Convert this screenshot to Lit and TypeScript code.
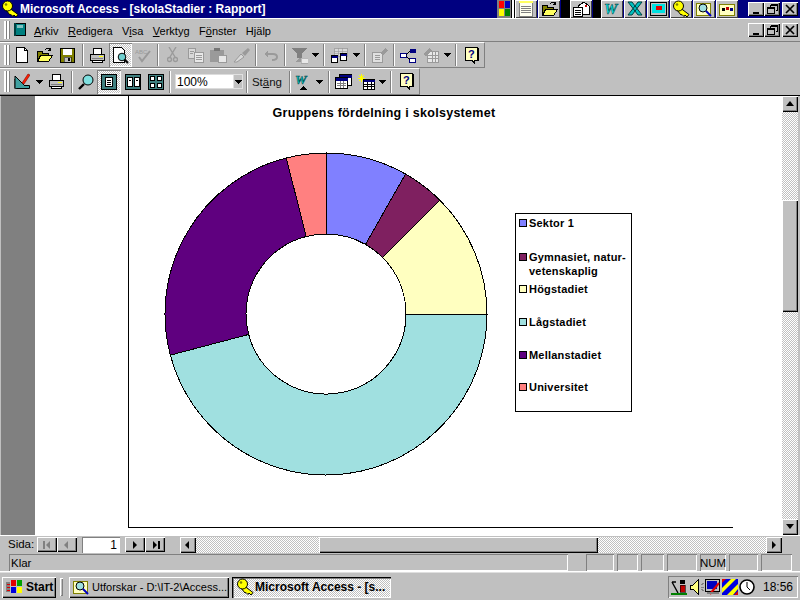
import { LitElement, html, svg, css } from "lit";
import { customElement } from "lit/decorators.js";

const I = (w: number, h: number, c: any) =>
  html`<svg class="ic" width=${w} height=${h} viewBox="0 0 ${w} ${h}" shape-rendering="crispEdges">${c}</svg>`;

const key = () => html`<svg class="ic" width="18" height="18" viewBox="0 0 18 18">
  <path d="M7 7 L17 14.500 L15 17 L13 15 L12 16.500 L10 14.500 L9 15 L5 10" fill="#ffff00" stroke="#000" stroke-width="1"/>
  <circle cx="6.500" cy="6" r="5" fill="#ffff00" stroke="#000"/><circle cx="5" cy="4.500" r="1.300" fill="#808000"/></svg>`;

const G = "#808080", D = "#9a9a9a";
const icons: Record<string, any> = {
  neww: I(16, 16, svg`<path d="M2.5 .5H10.5L13.5 3.5V15.5H2.5Z" fill="#fff" stroke="#000"/><path d="M10.5 .5V3.5H13.5" fill="none" stroke="#000"/>`),
  open: I(17, 16, svg`<path d="M1.5 4.5H6.5V6.5H12.5V14.5H1.5Z" fill="#808000" stroke="#000"/><path d="M1.5 14.5L4.5 8.5H16.5L12.5 14.5Z" fill="#ffff60" stroke="#000"/><path d="M9 2.5Q12 0 14.5 3M14.5 1V3.5H12" fill="none" stroke="#000"/>`),
  save: I(15, 15, svg`<rect x=".5" y=".5" width="14" height="14" fill="#808000" stroke="#000"/><rect x="3" y="1" width="9" height="6" fill="#fff"/><rect x="4" y="9" width="7" height="5" fill="#c0c0c0" stroke="#000" stroke-width=".5"/><rect x="8" y="10" width="2" height="3" fill="#000"/>`),
  print: I(17, 15, svg`<path d="M4.5 .5H12.5V6.5H4.5Z" fill="#fff" stroke="#000"/><path d="M1.5 6.5H15.5V12.5H1.5Z" fill="#c0c0c0" stroke="#000"/><rect x="3" y="10" width="11" height="1" fill="#808080"/><rect x="10" y="8" width="4" height="1" fill="#ffff00"/><path d="M3.5 12.5H13.5V14.5H3.5Z" fill="#fff" stroke="#000"/>`),
  prev: I(17, 17, svg`<path d="M1.5 .5H9.5L12.5 3.5V15.5H1.5Z" fill="#fff" stroke="#000"/><circle cx="10" cy="10" r="3.8" fill="#6fd0d0" stroke="#000" shape-rendering="auto"/><path d="M12.5 12.5L16 16" stroke="#000" stroke-width="2" shape-rendering="auto"/>`),
  spell: I(17, 15, svg`<text x="0" y="6" font-size="6" font-family="Liberation Sans" fill="${D}">ABC</text><path d="M4 9L7 13L15 3" fill="none" stroke="${D}" stroke-width="2" shape-rendering="auto"/>`),
  cut: I(11, 16, svg`<path d="M2 0L8 10M9 0L3 10" stroke="${D}" stroke-width="1.4" shape-rendering="auto"/><circle cx="2.5" cy="12.5" r="2" fill="none" stroke="${D}" stroke-width="1.4" shape-rendering="auto"/><circle cx="8.5" cy="12.5" r="2" fill="none" stroke="${D}" stroke-width="1.4" shape-rendering="auto"/>`),
  copy: I(16, 15, svg`<path d="M.5 .5H7.5V10.5H.5Z" fill="#d8d8d8" stroke="${D}"/><path d="M6.5 4.5H15.5V14.5H6.5Z" fill="#e8e8e8" stroke="${D}"/><path d="M8 7H14M8 9H14M8 11H14M2 3H6M2 5H5" stroke="${D}"/>`),
  paste: I(17, 15, svg`<rect x=".5" y="2.5" width="13" height="11" fill="${D}" stroke="${D}"/><rect x="4" y="0" width="6" height="3" fill="#777"/><path d="M8.5 7.5H16.5V14.5H8.5Z" fill="#e8e8e8" stroke="${D}"/>`),
  brush: I(18, 16, svg`<path d="M1 15L8 7L11 10L4 15Z" fill="#d8d8d8" stroke="${D}" shape-rendering="auto"/><path d="M9 6L15 1L17 3L12 9Z" fill="${D}" shape-rendering="auto"/>`),
  undo: I(15, 11, svg`<path d="M2 4H10Q14 4 14 7Q14 10 9 10" fill="none" stroke="${D}" stroke-width="2" shape-rendering="auto"/><path d="M5 0V8L1 4Z" fill="${D}"/>`),
  chart: I(17, 17, svg`<path d="M0 1H16L11 6V11H6V6Z" fill="${G}"/><path d="M4 15L8 11H10L14 15Z" fill="${D}"/><rect x="10" y="11" width="7" height="5" fill="#e8e8e8" stroke="${D}" stroke-width=".6"/>`),
  form: I(17, 15, svg`<rect x="3" y="0" width="13" height="8" fill="#d8d8d8" stroke="${D}" stroke-width=".8"/><path d="M3 3H16M3 5.5H16M7 0V8M11 0V8" stroke="${D}" stroke-width=".6"/><rect x=".5" y="7.5" width="6" height="7" fill="#fff" stroke="#000"/><rect x=".5" y="7.5" width="6" height="2" fill="#000080"/><rect x="9.5" y="5.5" width="6" height="7" fill="#fff" stroke="#000"/><rect x="9.5" y="5.5" width="6" height="2" fill="#000080"/>`),
  props: I(16, 15, svg`<path d="M.5 4.5H10.5V14.5H.5Z" fill="#e0e0e0" stroke="${D}"/><path d="M3 7H8M3 9H8M3 11H8" stroke="${D}"/><path d="M8 5L13 0L16 2L11 7Z" fill="${D}"/>`),
  rel: I(16, 15, svg`<rect x=".5" y="5.5" width="6" height="4" fill="#fff" stroke="#000080"/><rect x="9.5" y=".5" width="6" height="4" fill="#000080"/><rect x="9.5" y="10.5" width="6" height="4" fill="#fff" stroke="#000080"/><path d="M6 7L10 3M6 8L10 12" stroke="#000" shape-rendering="auto"/>`),
  newobj: I(16, 15, svg`<rect x="4.5" y="3.5" width="11" height="11" fill="#e8e8e8" stroke="${D}"/><path d="M5 7H15M5 10H15M9 4V14M12 4V14" stroke="${D}"/><path d="M0 6L6 0L9 2L3 8Z" fill="${D}"/>`),
  help: I(14, 17, svg`<path d="M.5 .5H12.5V13.5H9.5V16L7 13.5H.5Z" fill="#ffffc0" stroke="#000"/><rect x="13" y="1" width="1" height="13" fill="#000"/><text x="3" y="11" font-size="11" font-weight="700" font-family="Liberation Sans" fill="#000080">?</text>`),
  setup: I(16, 17, svg`<path d="M1 15.5H15.5V12.500H5.500L1 6Z" fill="#40a0a0" stroke="#000" shape-rendering="auto"/><path d="M1 15.500L1 3L11 13" fill="#40a0a0" stroke="#000" shape-rendering="auto"/><path d="M8 10L14 1L16 2L10 11Z" fill="#ff2000" stroke="#800000" stroke-width=".6" shape-rendering="auto"/>`),
  zoom: I(16, 16, svg`<circle cx="10" cy="6" r="5" fill="#80e0e0" stroke="#000" shape-rendering="auto"/><path d="M6 10L1 15" stroke="#000" stroke-width="2.4" shape-rendering="auto"/>`),
  p1: I(16, 16, svg`<rect width="16" height="16" fill="#408080"/><rect x=".5" y=".5" width="15" height="15" fill="none" stroke="#000"/><rect x="4.5" y="3.5" width="7" height="9" fill="#fff" stroke="#000"/><path d="M6 6H10M6 8H10M6 10H10" stroke="#000"/>`),
  p2: I(16, 16, svg`<rect width="16" height="16" fill="#408080"/><rect x=".5" y=".5" width="15" height="15" fill="none" stroke="#000"/><rect x="2.5" y="3.5" width="5" height="9" fill="#fff" stroke="#000"/><rect x="9.5" y="3.5" width="5" height="9" fill="#fff" stroke="#000"/><path d="M4 6H6M11 6H13" stroke="#000"/>`),
  p4: I(16, 16, svg`<rect width="16" height="16" fill="#408080"/><rect x=".5" y=".5" width="15" height="15" fill="none" stroke="#000"/><rect x="2.5" y="2.5" width="4" height="4" fill="#fff" stroke="#000"/><rect x="9.5" y="2.5" width="4" height="4" fill="#fff" stroke="#000"/><rect x="2.5" y="9.5" width="4" height="4" fill="#fff" stroke="#000"/><rect x="9.5" y="9.5" width="4" height="4" fill="#fff" stroke="#000"/>`),
  wd: I(17, 17, svg`<text x="0" y="11" font-size="13" font-style="italic" font-weight="700" font-family="Liberation Serif" fill="#00c0c0" stroke="#004040" stroke-width=".5">W</text><path d="M4 17L8 13L12 17Z" fill="#000"/>`),
  db: I(17, 15, svg`<rect x="4.5" y=".5" width="12" height="11" fill="#fff" stroke="#000"/><rect x="4.5" y=".5" width="12" height="3" fill="#000080"/><rect x=".5" y="3.5" width="12" height="11" fill="#fff" stroke="#000"/><rect x=".5" y="3.5" width="12" height="3" fill="#000080"/><path d="M2 9H11M2 11H11M5 7V14M8 7V14" stroke="#808080"/>`),
  nt: I(17, 16, svg`<path d="M3 0V8M0 4H7M1 1L6 7M6 1L1 7" stroke="#ffff00"/><rect x="5.5" y="5.5" width="11" height="10" fill="#fff" stroke="#000"/><rect x="5.5" y="5.5" width="11" height="2" fill="#000080"/><path d="M6 10H16M6 12.500H16M9 8V15M13 8V15" stroke="#000"/>`),
  flag: I(14, 18, svg`<rect width="14" height="18" fill="#808080"/><rect x="2" y="1" width="5" height="7" fill="#ff0000"/><rect x="8" y="1" width="5" height="7" fill="#0000c0"/><rect x="2" y="9" width="5" height="7" fill="#ffff00"/><rect x="8" y="9" width="5" height="7" fill="#008000"/>`),
  notes: I(14, 16, svg`<rect x=".5" y=".5" width="13" height="15" fill="#fffff0" stroke="#808080"/><rect x="0" y="0" width="14" height="2" fill="#ffff60"/><path d="M2 5H12M2 7H12M2 9H12M2 11H12" stroke="#808080"/>`),
  mail: I(17, 16, svg`<path d="M5 5L11 1L16 5V13H5Z" fill="#fff" stroke="#000"/><rect x="12" y="4" width="2" height="2" fill="#c00000"/><rect x=".5" y="6.5" width="9" height="9" fill="#fff" stroke="#000"/><path d="M2 9H8M2 11H8M2 13H8" stroke="#000"/>`),
  W: I(18, 16, svg`<text x="1" y="13" font-size="15" font-style="italic" font-weight="700" font-family="Liberation Serif" fill="#00e0e0" stroke="#004040" stroke-width=".5">W</text>`),
  X: I(18, 16, svg`<path d="M2 1H6L16 14H12ZM12 1H16L6 14H2Z" fill="#00c0c0" stroke="#004040" shape-rendering="auto"/>`),
  pp: I(17, 14, svg`<rect x=".5" y=".5" width="16" height="13" fill="#c0c0c0" stroke="#000"/><rect x="2" y="2" width="13" height="9" fill="#00e0e0"/><rect x="6" y="4" width="6" height="4" fill="#e00000"/>`),
  fm: I(16, 16, svg`<path d="M.5 2.500H14.500V14.500H.5Z" fill="#ffffc0" stroke="#808000"/><circle cx="7" cy="7" r="4" fill="#a0e0e0" stroke="#000" shape-rendering="auto"/><path d="M10 10L15 15" stroke="#0000c0" stroke-width="2" shape-rendering="auto"/>`),
  fd: I(16, 14, svg`<path d="M.5 2.500H15.500V13.500H.5Z" fill="#ffffc0" stroke="#808000"/><rect x="3" y="6" width="3" height="3" fill="#000"/><rect x="7" y="5" width="3" height="3" fill="#c00000"/><rect x="11" y="6" width="3" height="3" fill="#000080"/>`),
  start: I(18, 16, svg`<path d="M0 3H4V13H0Z" fill="#808080"/><rect x="5" y="1" width="5" height="6" fill="#e00000"/><rect x="11" y="1" width="5" height="6" fill="#00a000"/><rect x="5" y="8" width="5" height="6" fill="#0000e0"/><rect x="11" y="8" width="5" height="6" fill="#ffff00"/><path d="M1 5H4M1 8H4M1 11H4" stroke="#e00000"/>`),
  figure: I(20, 18, svg`<path d="M1 4L7 15M1 4L5 4" stroke="#000" stroke-width="1.4" shape-rendering="auto"/><rect x="9" y="2" width="5" height="4" fill="#000"/><rect x="9" y="7" width="5" height="7" fill="#c00000" stroke="#000" stroke-width=".6"/><rect x="0" y="15" width="16" height="2" fill="#008000"/>`),
  speak: I(16, 16, svg`<path d="M1 6H4L9 1V15L4 10H1Z" fill="#ffff80" stroke="#000"/><path d="M12 6L15 4M12 8H15M12 10L15 12" stroke="#808080"/>`),
  mon: I(16, 16, svg`<rect x=".5" y=".5" width="14" height="12" fill="#c0c0c0" stroke="#000"/><rect x="2" y="2" width="10" height="8" fill="#0000c0"/><path d="M5 15L14 4" stroke="#e00000" stroke-width="2" shape-rendering="auto"/><path d="M2 13H14V15H2Z" fill="#808080"/>`),
  stripes: I(16, 16, svg`<rect width="16" height="16" fill="#0000e0"/><path d="M0 9L9 0H14L0 14Z" fill="#ffff00" shape-rendering="auto"/><path d="M16 5L5 16H11L16 10Z" fill="#ffff00" shape-rendering="auto"/><path d="M0 0H4L0 4ZM16 16H12L16 12Z" fill="#e00000" shape-rendering="auto"/>`),
  clock: I(16, 16, svg`<circle cx="8" cy="8" r="7" fill="#fff" stroke="#000" stroke-width="1.6" shape-rendering="auto"/><path d="M8 3V8L11 11" fill="none" stroke="#000" shape-rendering="auto"/>`),
  book: I(12, 13, svg`<rect x=".5" y=".5" width="11" height="12" fill="#008080" stroke="#000"/><rect x="3" y="2" width="6" height="3" fill="#80c0c0"/><rect x="0" y="0" width="2" height="13" fill="#004040"/>`),
};

const DOWN = html`<svg class="ic" width="7" height="4" viewBox="0 0 7 4" shape-rendering="crispEdges"><path d="M0 0H7L3.500 4Z" fill="#000"/></svg>`;
const tri = (d: string) => {
  const p: Record<string, string> = { u: "M4 1L0 6H8Z", d: "M0 1H8L4 6Z", l: "M5 0V8L1 4Z", r: "M2 0V8L6 4Z" };
  return html`<svg class="ic" width="8" height="8" viewBox="0 0 8 8"><path d=${p[d]} fill="#000"/></svg>`;
};
const WB = (k: string) => {
  const c: Record<string, any> = {
    min: svg`<rect x="2" y="8" width="6" height="2" fill="#000"/>`,
    res: svg`<path d="M3.500 .5H10.500V6.500H8.500M3.500 2.500V.5M3.500 1.500H10.500" fill="none" stroke="#000"/><path d="M.5 3.500H7.500V9.500H.5ZM.5 4.500H7.500" fill="#c0c0c0" stroke="#000"/>`,
    x: svg`<path d="M1 1L9 9M9 1L1 9" stroke="#000" stroke-width="1.700" shape-rendering="auto"/>`,
  };
  return html`<div class="wb ${k}"><svg class="ic" width="11" height="10" viewBox="0 0 11 10" shape-rendering="crispEdges">${c[k]}</svg></div>`;
};

type It = { w: number; i?: string; k?: "sep" | "arr" | "on" };
const tb1: It[] = [
  { w: 23, i: "neww" }, { w: 23, i: "open" }, { w: 23, i: "save" }, { w: 7, k: "sep" },
  { w: 23, i: "print" }, { w: 23, i: "prev", k: "on" }, { w: 23, i: "spell" }, { w: 6, k: "sep" },
  { w: 23, i: "cut" }, { w: 23, i: "copy" }, { w: 23, i: "paste" }, { w: 23, i: "brush" }, { w: 6, k: "sep" },
  { w: 23, i: "undo" }, { w: 6, k: "sep" }, { w: 23, i: "chart" }, { w: 9, k: "arr" }, { w: 8, k: "sep" },
  { w: 23, i: "form" }, { w: 10, k: "arr" }, { w: 7, k: "sep" }, { w: 23, i: "props" }, { w: 5, k: "sep" },
  { w: 23, i: "rel" }, { w: 23, i: "newobj" }, { w: 10, k: "arr" }, { w: 8, k: "sep" }, { w: 23, i: "help" },
];
const tb2a: It[] = [
  { w: 24, i: "setup" }, { w: 10, k: "arr" }, { w: 25, i: "print" }, { w: 6, k: "sep" },
  { w: 22, i: "zoom" }, { w: 24, i: "p1", k: "on" }, { w: 23, i: "p2" }, { w: 23, i: "p4" }, { w: 6, k: "sep" },
];
const tb2b: It[] = [
  { w: 4, k: "sep" }, { w: 23, i: "wd" }, { w: 9, k: "arr" }, { w: 9, k: "sep" }, { w: 21, i: "db" }, { w: 24, i: "nt" },
  { w: 9, k: "arr" }, { w: 8, k: "sep" }, { w: 23, i: "help" },
];

const slices = [
  { n: ["Sektor 1"], c: "#8080ff", a: 0, b: 29.6 },
  { n: ["Gymnasiet, natur-", "vetenskaplig"], c: "#7f2060", a: 29.6, b: 45 },
  { n: ["Högstadiet"], c: "#ffffc0", a: 45, b: 90 },
  { n: ["Lågstadiet"], c: "#a0e0e0", a: 90, b: 255.2 },
  { n: ["Mellanstadiet"], c: "#5f007f", a: 255.2, b: 345.7 },
  { n: ["Universitet"], c: "#ff8080", a: 345.7, b: 360 },
];
const pt = (r: number, deg: number) => {
  const t = (deg * Math.PI) / 180;
  return `${(166 + r * Math.sin(t)).toFixed(2)} ${(166 - r * Math.cos(t)).toFixed(2)}`;
};
const arc = (a: number, b: number) => {
  const l = b - a > 180 ? 1 : 0;
  return `M${pt(161, a)}A161 161 0 ${l} 1 ${pt(161, b)}L${pt(80, b)}A80 80 0 ${l} 0 ${pt(80, a)}Z`;
};

@customElement("app-root")
export class AppRoot extends LitElement {
  static styles = css`
    :host { display: block; width: 800px; height: 600px; overflow: hidden; background: #c0c0c0; color: #000;
      font: 12px "Liberation Sans", Arial, sans-serif; }
    .ic { display: block; flex: none; }
    .title { height: 18px; background: #000080; display: flex; align-items: center; }
    .title .ticon { margin: 0 1px 0 1px; }
    .title .tt { color: #fff; font-weight: 700; font-size: 12px; white-space: nowrap; }
    .apps { margin-left: auto; display: flex; height: 18px; align-items: stretch; }
    .blk { background: #000; }
    .white { background: #fff; }
    .app { width: 22px; margin-right: 1px; background: #c0c0c0; display: flex; align-items: center; justify-content: center;
      box-shadow: inset 1px 1px #fff, inset -1px -1px #404040; }
    .wbs { display: flex; align-items: center; margin-left: 9px; }
    .wb { width: 16px; height: 14px; background: #c0c0c0; display: flex; align-items: center; justify-content: center;
      box-shadow: inset 1px 1px #fff, inset -1px -1px #000, inset -2px -2px #808080; box-sizing: border-box; }
    .wb.x { margin-left: 2px; margin-right: 2px; }
    .menu { height: 24px; box-sizing: border-box; border-top: 1px solid #fff; border-bottom: 1px solid #808080; display: flex; align-items: center; }
    .grip { width: 10px; height: 100%; flex: none; display: flex; justify-content: flex-start; padding-left: 4px; box-sizing: border-box; align-items: center; }
    .grip i { display: block; width: 2px; height: 84%; background: #fff; border-right: 1px solid #808080; box-sizing: content-box; }
    .menu .bk { margin: 0 8px 2px 4px; }
    .menu .m { margin-right: 9.500px; font-size: 11px; padding-top: 2px; }
    .menu .wbs { margin-left: auto; }
    .tbw { height: 26px; }
    .tb { display: inline-flex; height: 26px; box-sizing: border-box; align-items: center; width: 485px;
      border-top: 1px solid #fff; border-bottom: 1px solid #808080; border-right: 1px solid #808080; vertical-align: top; }
    .tbw2 { height: 27px; }
    .tb.two { width: 420px; height: 27px; }
    .it { height: 24px; display: flex; align-items: center; justify-content: center; flex: none; box-sizing: border-box; }
    .it.on { background: repeating-conic-gradient(#c0c0c0 0 25%, #fff 0 50%) 0 0 / 2px 2px; box-shadow: inset 1px 1px #808080, inset -1px -1px #fff; }
    .sep::before { content: ""; display: block; width: 1px; height: 22px; background: #808080; border-right: 1px solid #fff; }
    .combo { width: 68px; height: 15px; margin: 0 3px 0 2px; background: #fff; flex: none; display: flex; align-items: center; justify-content: space-between; padding-left: 2px; box-sizing: border-box; font-size: 12px; box-shadow: inset 0 0 0 1px #dcdcdc; }
    .combo b { width: 10px; height: 15px; background: #c0c0c0; display: flex; align-items: center; justify-content: center; box-shadow: inset 0 0 0 1px #e0e0e0; }
    .close { width: 34px; flex: none; text-align: right; font-size: 11.500px; margin-right: 6px; color: #111; }
    .work { height: 440px; box-sizing: border-box; border-top: 1px solid #000; display: flex; }
    .side { width: 34px; margin-left: 1px; background: #808080; flex: none; }
    .view { flex: none; width: 747px; background: #fff; padding-left: 93px; box-sizing: border-box; }
    .paper { width: 605px; height: 432px; box-sizing: border-box; border-left: 1px solid #000; border-bottom: 1px solid #000; }
    .ptitle { width: 510px; text-align: center; padding-top: 10px; height: 52px; box-sizing: border-box; font-weight: 700; font-size: 12.500px; letter-spacing: .28px; }
    .chart { display: flex; align-items: flex-start; padding-left: 31px; }
    .pie { display: block; flex: none; }
    .legend { margin: 65px 0 0 23px; width: 117px; height: 199px; box-sizing: border-box; border: 1px solid #000; padding: 2px 0 0 3px;
      display: grid; grid-template-rows: 34px 32px 33px 33px 32px auto; font-weight: 700; font-size: 11px; letter-spacing: .2px; }
    .li { display: flex; align-items: flex-start; line-height: 14px; }
    .sw { width: 6px; height: 6px; border: 1px solid #000; margin: 3px 2px 0 0; flex: none; }
    .vs { width: 16px; margin-left: 0; flex: none; display: flex; flex-direction: column; background: repeating-conic-gradient(#c0c0c0 0 25%, #fff 0 50%) 0 0 / 2px 2px; }
    .btn { background: #c0c0c0; display: flex; align-items: center; justify-content: center; flex: none; box-sizing: border-box;
      box-shadow: inset 1px 1px #fff, inset -1px -1px #000, inset -2px -2px #808080; }
    .vs .btn { height: 16px; }
    .vs .up { height: 88px; flex: none; }
    .vs .btn.thumb { height: 112px; width: 16px; flex: none; }
    .vs .mid { flex: 1; }
    .nav { height: 18px; display: flex; align-items: center; border-top: 1px solid #fff; box-sizing: border-box; }
    .sida { margin: 0 0 2px 8px; width: 29px; font-size: 11.500px; }
    .nb { width: 20px; height: 15px; }
    .nb.dis svg path, .nb.dis svg rect { fill: #808080; }
    .pg { width: 38px; height: 16px; margin: 0 5px; background: #fff; text-align: right; font-size: 12px; line-height: 16px; padding-right: 3px; box-sizing: border-box; box-shadow: inset 1px 1px #808080; }
    .hs { margin-left: 15px; flex: none; width: 602px; height: 16px; display: flex; background: repeating-conic-gradient(#c0c0c0 0 25%, #fff 0 50%) 0 0 / 2px 2px; }
    .hs .btn { width: 16px; height: 16px; }
    .hs .btn.thumb { margin-left: 123px; width: 279px; }
    .hs .right { margin-left: auto; }
    .status { height: 19px; display: flex; align-items: center; border-bottom: 1px solid #fff; box-sizing: border-box; padding-top: 1px; }
    .pn { height: 17px; box-sizing: border-box; flex: none; font-size: 11.500px; line-height: 18px; box-shadow: inset 1px 1px #808080, inset -1px -1px #fff; margin-left: 3px; text-align: center; }
    .pn.klar { width: 559px; margin-left: 9px; margin-right: 15px; text-align: left; padding-left: 2px; }
    .task { height: 28px; display: flex; align-items: center; border-top: 1px solid #dfdfdf; box-sizing: border-box; padding-top: 1px; }
    .tbtn { height: 21px; box-sizing: border-box; display: flex; align-items: center; gap: 3px; flex: none; background: #c0c0c0; white-space: nowrap; overflow: hidden;
      box-shadow: inset 1px 1px #fff, inset -1px -1px #000, inset -2px -2px #808080; font-size: 11px; padding-left: 4px; }
    .start { width: 54px; margin-left: 2px; font-weight: 700; font-size: 12px; gap: 2px; }
    .tgrip { width: 3px; height: 18px; margin: 0 6px 0 4px; flex: none; background: #c0c0c0; box-shadow: inset 1px 1px #fff, inset -1px -1px #808080; }
    .ut { width: 160px; }
    .acc { width: 159px; margin-left: 3px; font-weight: 700; font-size: 12px; gap: 1px; background: repeating-conic-gradient(#c0c0c0 0 25%, #fff 0 50%) 0 0 / 2px 2px;
      box-shadow: inset 1px 1px #000, inset 2px 2px #808080, inset -1px -1px #fff; }
    .tray { margin-left: auto; margin-right: 2px; width: 130px; height: 22px; box-sizing: border-box; display: flex; align-items: center; padding-left: 3px; box-shadow: inset 1px 1px #808080, inset -1px -1px #fff; }
    .tray .st { margin-left: 1px; }
    .tray .sp { margin-left: -2px; }
    .time { margin-left: 8px; font-size: 12px; }
    u { text-underline-offset: 1px; }
  `;

  private items(list: It[]) {
    return list.map((t) => {
      if (t.k === "sep") return html`<div class="it sep" style="width:${t.w}px"></div>`;
      if (t.k === "arr") return html`<div class="it" style="width:${t.w}px">${DOWN}</div>`;
      return html`<div class="it ${t.k === "on" ? "on" : ""}" style="width:${t.w}px">${icons[t.i!]}</div>`;
    });
  }

  render() {
    const grip = html`<div class="grip"><i></i><i></i></div>`;
    const nb = (c: any, dis = false) => html`<div class="btn nb ${dis ? "dis" : ""}">${c}</div>`;
    const first = html`<svg class="ic" width="9" height="8" viewBox="0 0 9 8"><rect x="0" y="0" width="2" height="8" fill="#000"/><path d="M7 0V8L3 4Z" fill="#000"/></svg>`;
    const last = html`<svg class="ic" width="9" height="8" viewBox="0 0 9 8"><rect x="7" y="0" width="2" height="8" fill="#000"/><path d="M2 0V8L6 4Z" fill="#000"/></svg>`;
    return html`
      <div class="title">
        <div class="ticon">${key()}</div>
        <div class="tt">Microsoft Access - [skolaStadier : Rapport]</div>
        <div class="apps">
          ${icons.flag}
          <div class="blk" style="width:1px"></div><div class="white" style="width:2px"></div><div class="blk" style="width:1px"></div>
          <div class="app">${icons.notes}</div><div class="app">${icons.open}</div>
          <div class="blk" style="width:9px"></div>
          <div class="app">${icons.mail}</div>
          <div class="blk" style="width:8px"></div>
          <div class="app">${icons.W}</div><div class="app">${icons.X}</div><div class="app">${icons.pp}</div>
          <div class="app">${key()}</div><div class="app">${icons.fm}</div><div class="app">${icons.fd}</div>
        </div>
        <div class="wbs">${WB("min")}${WB("res")}${WB("x")}</div>
      </div>
      <div class="menu">
        ${grip}<div class="bk">${icons.book}</div>
        <span class="m"><u>A</u>rkiv</span><span class="m"><u>R</u>edigera</span><span class="m">V<u>i</u>sa</span>
        <span class="m"><u>V</u>erktyg</span><span class="m">F<u>ö</u>nster</span><span class="m">H<u>j</u>älp</span>
        <div class="wbs">${WB("min")}${WB("res")}${WB("x")}</div>
      </div>
      <div class="tbw"><div class="tb">${grip}${this.items(tb1)}</div></div>
      <div class="tbw2"><div class="tb two">${grip}${this.items(tb2a)}
        <div class="combo"><span>100%</span><b>${DOWN}</b></div>
        <div class="it sep" style="width:2px"></div>
        <div class="close">St<u>ä</u>ng</div>
        ${this.items(tb2b)}</div></div>
      <div class="work">
        <div class="side"></div>
        <div class="view">
          <div class="paper">
            <div class="ptitle">Gruppens fördelning i skolsystemet</div>
            <div class="chart">
              <svg class="pie" width="332" height="332" viewBox="0 0 332 332" shape-rendering="crispEdges">
                ${slices.map((s) => svg`<path d=${arc(s.a, s.b)} fill=${s.c} stroke="#000" stroke-width="1"/>`)}
              </svg>
              <div class="legend">
                ${slices.map((s) => html`<div class="li"><span class="sw" style="background:${s.c}"></span><span>${s.n.map((l, i) => html`${i ? html`<br />` : ""}${l}`)}</span></div>`)}
              </div>
            </div>
          </div>
        </div>
        <div class="vs">
          <div class="btn">${tri("u")}</div>
          <div class="up"></div>
          <div class="btn thumb"></div>
          <div class="mid"></div>
          <div class="btn">${tri("d")}</div>
        </div>
      </div>
      <div class="nav">
        <div class="sida">Sida:</div>
        ${nb(first, true)}${nb(tri("l"), true)}
        <div class="pg">1</div>
        ${nb(tri("r"))}${nb(last)}
        <div class="hs">
          <div class="btn">${tri("l")}</div>
          <div class="btn thumb"></div>
          <div class="btn right">${tri("r")}</div>
        </div>
      </div>
      <div class="status">
        <div class="pn klar">Klar</div>
        <div class="pn" style="width:28px"></div>
        <div class="pn" style="width:21px"></div>
        <div class="pn" style="width:23px"></div>
        <div class="pn" style="width:30px"></div>
        <div class="pn" style="width:26px">NUM</div>
        <div class="pn" style="width:29px"></div>
        <div class="pn" style="width:31px"></div>
      </div>
      <div class="task">
        <div class="tbtn start">${icons.start}<span>Start</span></div>
        <div class="tgrip"></div>
        <div class="tbtn ut">${icons.fm}<span>Utforskar - D:\\IT-2\\Access...</span></div>
        <div class="tbtn acc">${key()}<span>Microsoft Access - [s...</span></div>
        <div class="tray">${icons.figure}<span class="sp">${icons.speak}</span>${icons.mon}<span class="st">${icons.stripes}</span><span class="st">${icons.clock}</span><span class="time">18:56</span></div>
      </div>
    `;
  }
}
